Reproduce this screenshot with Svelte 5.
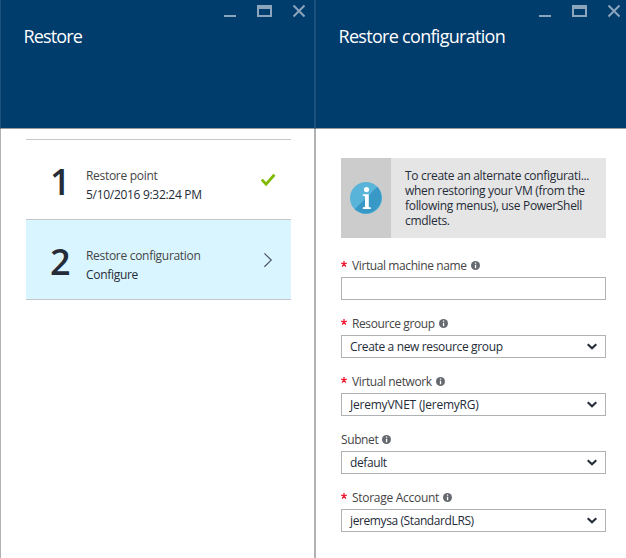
<script>
  const steps = [
    { n: '1', title: 'Restore point', value: '5/10/2016 9:32:24 PM', cls: 'point', done: true },
    { n: '2', title: 'Restore configuration', value: 'Configure', cls: 'config', done: false }
  ];
  const fields = [
    { label: 'Virtual machine name', required: true, value: '', cls: 'vm', select: false },
    { label: 'Resource group', required: true, value: 'Create a new resource group', cls: 'rg', select: true },
    { label: 'Virtual network', required: true, value: 'JeremyVNET (JeremyRG)', cls: 'vnet', select: true },
    { label: 'Subnet', required: false, value: 'default', cls: 'subnet', select: true },
    { label: 'Storage Account', required: true, value: 'jeremysa (StandardLRS)', cls: 'storage', select: true }
  ];
  const message = 'To create an alternate configurati...\nwhen restoring your VM (from the\nfollowing menus), use PowerShell\ncmdlets.';
</script>

{#snippet header(title)}
  <header>
    <svg class="controls" width="82" height="14" viewBox="0 0 82 14" shape-rendering="crispEdges">
      <path d="M0 11h12v2H0z" />
      <path fill-rule="evenodd" d="M33 1h15v12H33zM35 5v6h11V5z" />
      <path class="x" shape-rendering="auto" d="M69.5 1.5l11 11M80.5 1.5l-11 11" />
    </svg>
    <h1>{title}</h1>
  </header>
{/snippet}

<div class="portal">
  <section class="blade left">
    {@render header('Restore')}
    <div class="steps">
      {#each steps as s}
        <div class="step {s.cls}" class:active={!s.done}>
          <span class="num">{s.n}</span>
          <div class="text">
            <div class="title">{s.title}</div>
            <div class="value">{s.value}</div>
          </div>
          {#if s.done}
            <svg width="16" height="16" viewBox="0 0 16 16"><path d="M1.8 7.6l4.3 4.6L14.4 2.8" fill="none" stroke="#7fba00" stroke-width="2.8" /></svg>
          {:else}
            <svg width="16" height="16" viewBox="0 0 16 16"><path d="M4.4 1.4l6.8 6.7-6.8 6.7" fill="none" stroke="#4a5560" stroke-width="1.2" /></svg>
          {/if}
        </div>
      {/each}
    </div>
  </section>

  <section class="blade right">
    {@render header('Restore configuration')}
    <div class="form">
      <div class="info">
        <div class="badge">
          <svg width="32" height="32" viewBox="0 0 32 32">
            <circle cx="16" cy="16" r="16" fill="#59b4d9" />
            <path d="M27.3 4.7A16 16 0 0 1 4.7 27.3z" fill="#3999c6" />
            <circle cx="16.5" cy="7.6" r="2.6" fill="#fff" />
            <path d="M12.7 12.2h6.1v12.6l2 .7v1.4h-8v-1.4l2.2-.7V14.3l-2.3-.7z" fill="#fff" />
          </svg>
        </div>
        <div class="message">{message}</div>
      </div>
      {#each fields as f}
        <div class="field {f.cls}">
          <div class="label">
            {#if f.required}
              <svg class="star" width="6" height="6" viewBox="0 0 6 6"><path d="M3 3V0M3 3L.2 2.1M3 3L5.8 2.1M3 3L1.2 5.6M3 3L4.8 5.6" stroke="#f0142d" stroke-width="1.3" /></svg>
            {/if}
            <span class="name">{f.label}</span>
            <svg class="tip" width="9" height="9" viewBox="0 0 9 9">
              <circle cx="4.5" cy="4.5" r="4.5" fill="#666a70" />
              <path d="M3.9 1.6h1.3v1.2H3.9zM3.9 3.7h1.3v3.5H3.9z" fill="#fff" />
            </svg>
          </div>
          <div class="box">
            <span class="val">{f.value}</span>
            {#if f.select}
              <svg width="10" height="7" viewBox="0 0 10 7"><path d="M.7 1.2L5 5.3 9.3 1.2" fill="none" stroke="#252c38" stroke-width="2.1" /></svg>
            {/if}
          </div>
        </div>
      {/each}
    </div>
  </section>
</div>

<style>
  :global(body) { overflow: hidden; background: #fff; }
  .portal {
    display: flex;
    width: 626px;
    height: 558px;
    overflow: hidden;
    font-family: "Open Sans", "Noto Sans", sans-serif;
    font-size: 12px;
    color: #252c38;
  }
  .blade {
    box-sizing: border-box;
    flex: 0 0 315px;
    height: 558px;
    border: solid #b2b2b2;
    border-width: 0 1px;
  }
  header {
    box-sizing: border-box;
    height: 129px;
    margin: 0 -1px;
    padding-top: 4px;
    border: 1px solid #1a507c;
    border-top: 0;
    border-bottom-color: #999;
    background: #003c6c;
    color: #fff;
  }
  .controls { display: block; margin-left: 223px; fill: #8ca4bc; }
  .x { stroke: #8ca4bc; stroke-width: 2; fill: none; }
  h1 {
    margin: 6px 0 0 22.5px;
    font-size: 18px;
    line-height: 25px;
    font-weight: 400;
    white-space: nowrap;
    letter-spacing: -0.7px;
  }
  .left h1 { letter-spacing: -0.85px; }
  .steps { width: 265px; margin: 10px 0 0 25px; border-top: 1px solid #c4c8ca; }
  .step {
    box-sizing: border-box;
    display: flex;
    height: 80px;
    border-bottom: 1px solid #c4c8ca;
  }
  .active { background: #d9f5ff; }
  .num {
    width: 36px;
    padding: 18px 0 0 24px;
    font-size: 36px;
    line-height: 48px;
    font-weight: 600;
  }
  .text { width: 145px; padding-top: 26px; white-space: nowrap; }
  .title, .value { height: 19px; line-height: 19px; letter-spacing: -0.3px; }
  .title { color: #454545; }
  .step svg { margin: 32px 0 0 29px; }
  .form { padding: 29px 0 0 25px; width: 265px; }
  .info { display: flex; height: 80px; background: #e5e5e5; }
  .badge { display: grid; place-items: center; width: 50px; background: #ccc; }
  .message { padding: 10px 0 0 14px; line-height: 15px; white-space: pre; letter-spacing: -0.31px; }
  .field { height: 58px; }
  .info + .field { margin-top: 19px; }
  .label { display: flex; height: 20px; line-height: 18px; letter-spacing: -0.4px; color: #454545; }
  .storage .label { letter-spacing: -0.28px; }
  .star { margin: 4px 5px 0 0; }
  .tip { margin: 4px 0 0 4px; }
  .box {
    box-sizing: border-box;
    display: flex;
    justify-content: space-between;
    height: 23px;
    padding: 0 8px;
    border: 1px solid #afb1b4;
    line-height: 21px;
    white-space: nowrap;
    letter-spacing: -0.4px;
  }
  .rg .box { letter-spacing: -0.35px; }
  .vnet .box { letter-spacing: -0.22px; }
  .box svg { margin-top: 7px; }
</style>
